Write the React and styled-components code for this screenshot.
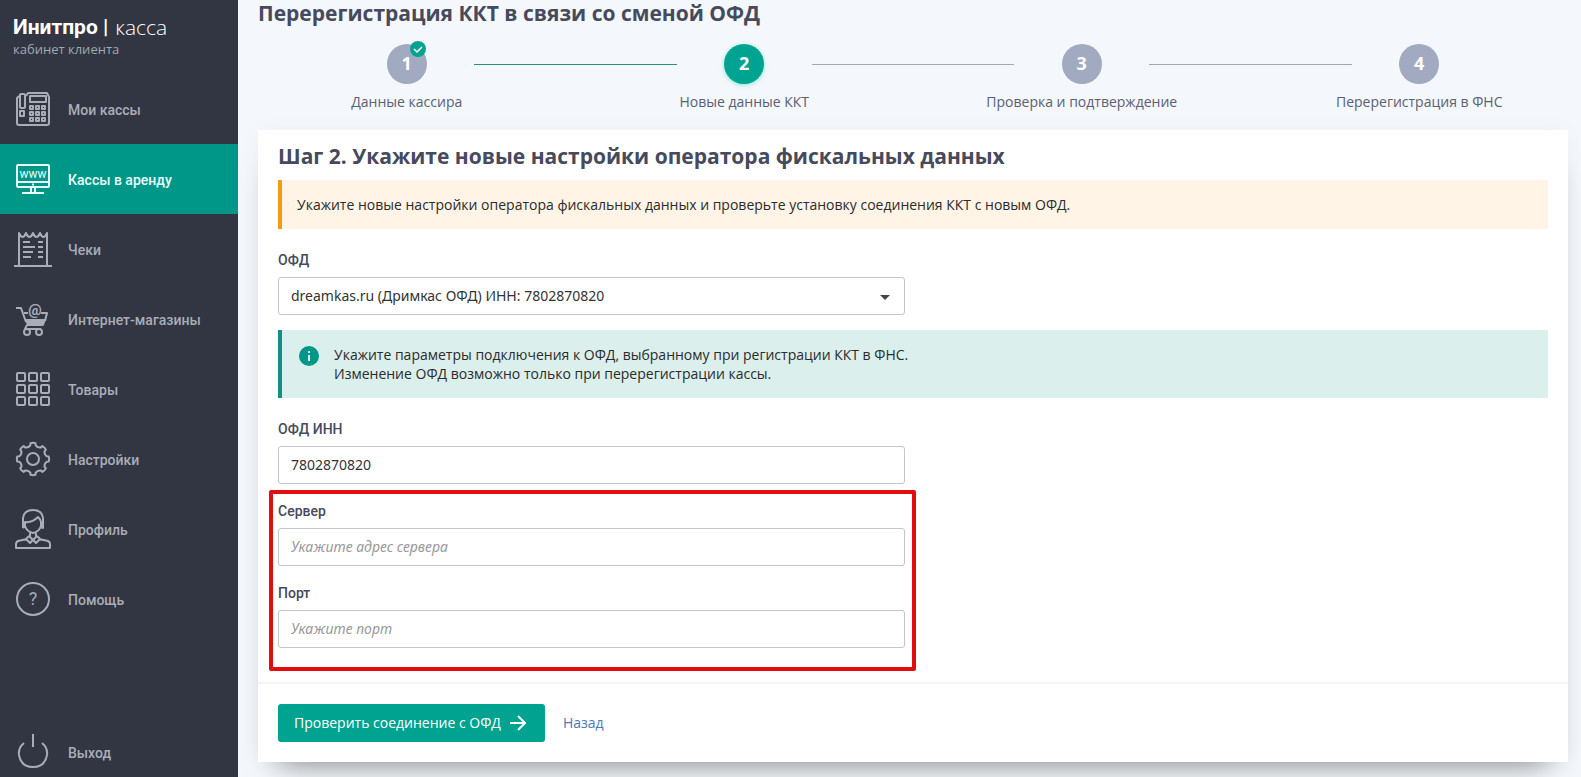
import { useState } from 'react';
import styled, { createGlobalStyle } from 'styled-components';

const menuArr = [
  { title: 'Мои кассы', icon: 'register' },
  { title: 'Кассы в аренду', icon: 'rent' },
  { title: 'Чеки', icon: 'receipt' },
  { title: 'Интернет-магазины', icon: 'cart' },
  { title: 'Товары', icon: 'goods' },
  { title: 'Настройки', icon: 'gear' },
  { title: 'Профиль', icon: 'profile' },
  { title: 'Помощь', icon: 'help' },
];

const stepArr = [
  { title: 'Данные кассира', done: true },
  { title: 'Новые данные ККТ', current: true },
  { title: 'Проверка и подтверждение' },
  { title: 'Перерегистрация в ФНС' },
];

const ofdArr = ['dreamkas.ru (Дримкас ОФД) ИНН: 7802870820'];

// контур шестерёнки из восьми зубцов
const gearPath = () => {
  const point = (radius, deg) => {
    const a = (deg * Math.PI) / 180;
    return `${(20 + radius * Math.cos(a)).toFixed(1)} ${(20 + radius * Math.sin(a)).toFixed(1)}`;
  };
  let d = `M${point(16, -9)}`;
  for (let i = 0; i < 8; i++) {
    const c = i * 45;
    d += ` Q${point(16.6, c)} ${point(16, c + 9)}`;
    d += ` L${point(14, c + 11)} Q${point(12, c + 22.5)} ${point(14, c + 34)} L${point(16, c + 36)}`;
  }
  return `${d}Z`;
};

const keys = [17, 23, 29];
const cells = [4, 16, 28];

const icons = {
  register: (
    <>
      <path d="M6 7 4 9v25q0 2 2 2h28q2 0 2-2V8l-2-4H15l-2 3" />
      <rect x="7" y="5" width="5" height="14" rx="1" />
      <rect x="7" y="22" width="4" height="5" />
      <rect x="17" y="7" width="16" height="6" />
      {keys.map((y) => keys.map((x) => <rect key={`${x}-${y}`} x={x} y={y} width="3" height="3" />))}
    </>
  ),
  rent: (
    <>
      <rect x="4" y="6" width="32" height="22" rx="1" />
      <path d="M4 23h32M18 28v5M22 28v5M9 34h22M19 25.500h2" />
      <text x="20" y="19" fontSize="12" fontWeight="400" textAnchor="middle">www</text>
    </>
  ),
  receipt: (
    <>
      <path d="M6 37V4q3.500 8 7 0 3.500 8 7 0 3.500 8 7 0 3.500 8 7 0v33M1 37h38" />
      <path d="M10 13h7M10 18h12M10 23h10M10 28h8M25 13h5M25 18h5M25 23h5M25 28h5" />
    </>
  ),
  cart: (
    <>
      <path d="M3 9h5l5 14M11 14h4M28 14h6l-2 8" />
      <path d="M12 20h21l-2 6q0 1-2 1H14z" fill="currentColor" stroke="none" />
      <path d="m14 26-2 4h16" />
      <circle cx="14" cy="33" r="3" fill="#323642" />
      <circle cx="26" cy="33" r="3" fill="#323642" />
      <text x="22" y="16" fontSize="15" fontWeight="700" textAnchor="middle">@</text>
    </>
  ),
  goods: cells.map((y) => cells.map((x) => <rect key={`${x}-${y}`} x={x} y={y} width="8" height="8" rx="1" />)),
  gear: (
    <>
      <path d={gearPath()} />
      <circle cx="20" cy="20" r="6" />
    </>
  ),
  profile: (
    <>
      <path d="M10 19V9q1-8 10-8t10 8v10q-1 0-2-2-2 6-8 7-6-1-8-7l-2 2" />
      <path d="M12 18v-5q7 1 13-5 3 3 3 5v5M17 24v4l3 3 3-3v-4" />
      <path d="m16 27-3 3 4 4 3-3 3 3 4-4-3-3M14 30 5 32q-2 1-2 3v4h34v-4q0-2-2-3l-9-2" />
    </>
  ),
  help: (
    <>
      <circle cx="20" cy="20" r="16" />
      <text x="20" y="26" fontSize="18" fontWeight="400" textAnchor="middle">?</text>
    </>
  ),
  exit: <path d="M20 2v13M11 11q-6 5-5 12 2 12 14 12t14-12q1-7-5-12" />,
};

function MenuItem({ title, icon, active, onClick }) {
  return (
    <NavLink href="#" $active={active} onClick={onClick}>
      <NavIcon viewBox="0 0 40 40" aria-hidden="true">{icons[icon]}</NavIcon>
      <NavText>{title}</NavText>
    </NavLink>
  );
}

export default function App() {
  const [section, setSection] = useState('Кассы в аренду');
  const [inn, setInn] = useState('7802870820');
  const [server, setServer] = useState('');
  const [port, setPort] = useState('');

  return (
    <>
      <GlobalStyle />
      <Layout>
        <Sidebar>
          <Logo>
            <Brand>
              <span>Инитпро |</span>
              <BrandLight>касса</BrandLight>
            </Brand>
            <BrandNote>кабинет клиента</BrandNote>
          </Logo>
          <Menu>
            {menuArr.map(({ title, icon }) => (
              <MenuItem
                key={title}
                title={title}
                icon={icon}
                active={title === section}
                onClick={() => setSection(title)}
              />
            ))}
          </Menu>
          <MenuBottom>
            <MenuItem title="Выход" icon="exit" />
          </MenuBottom>
        </Sidebar>

        <Main>
          <PageTitle>Перерегистрация ККТ в связи со сменой ОФД</PageTitle>
          <Steps>
            {stepArr.map(({ title, done, current }, index) => (
              <Step key={title}>
                <StepHead>
                  <StepLine $hidden={index === 0} $done={index > 0 && stepArr[index - 1].done} />
                  <StepCircle $current={current}>
                    {index + 1}
                    {done && (
                      <StepBadge viewBox="0 0 16 16">
                        <circle cx="8" cy="8" r="8" fill="#00a390" />
                        <path d="m4 8 3 3 5-5" fill="none" stroke="#fff" strokeWidth="1.500" />
                      </StepBadge>
                    )}
                  </StepCircle>
                  <StepLine $hidden={index === stepArr.length - 1} $done={done} />
                </StepHead>
                <StepTitle>{title}</StepTitle>
              </Step>
            ))}
          </Steps>

          <Card>
            <CardBody>
              <CardTitle>Шаг 2. Укажите новые настройки оператора фискальных данных</CardTitle>
              <Warning>
                Укажите новые настройки оператора фискальных данных и проверьте установку соединения ККТ с новым ОФД.
              </Warning>

              <FieldGrid>
                <Field>
                  <Label htmlFor="ofd">ОФД</Label>
                  <SelectWrapper>
                    <Select id="ofd">
                      {ofdArr.map((name) => (
                        <option key={name}>{name}</option>
                      ))}
                    </Select>
                    <Caret viewBox="0 0 10 5">
                      <path d="M0 0h10L5 5z" fill="#444" />
                    </Caret>
                  </SelectWrapper>
                </Field>
              </FieldGrid>

              <Info>
                <InfoIcon viewBox="0 0 20 20">
                  <circle cx="10" cy="10" r="10" fill="#009688" />
                  <path d="M9 5h2v2H9zM9 9h2v6H9z" fill="#dbefec" />
                </InfoIcon>
                <div>
                  Укажите параметры подключения к ОФД, выбранному при регистрации ККТ в ФНС.
                  <br />
                  Изменение ОФД возможно только при перерегистрации кассы.
                </div>
              </Info>

              <FieldGrid>
                <Field>
                  <Label htmlFor="inn">ОФД ИНН</Label>
                  <Input id="inn" value={inn} onChange={(e) => setInn(e.target.value)} />
                </Field>
                <Highlight>
                  <Field>
                    <Label htmlFor="server">Сервер</Label>
                    <Input
                      id="server"
                      placeholder="Укажите адрес сервера"
                      value={server}
                      onChange={(e) => setServer(e.target.value)}
                    />
                  </Field>
                  <Field>
                    <Label htmlFor="port">Порт</Label>
                    <Input
                      id="port"
                      placeholder="Укажите порт"
                      value={port}
                      onChange={(e) => setPort(e.target.value)}
                    />
                  </Field>
                </Highlight>
              </FieldGrid>
            </CardBody>

            <CardFooter>
              <SubmitBtn type="button">
                Проверить соединение с ОФД
                <Arrow viewBox="0 0 18 18">
                  <path d="M1 9h15M9 2l7 7-7 7" />
                </Arrow>
              </SubmitBtn>
              <BackLink href="#">Назад</BackLink>
            </CardFooter>
          </Card>
        </Main>
      </Layout>
    </>
  );
}

const GlobalStyle = createGlobalStyle`
  * {
    box-sizing: border-box;
  }
  body {
    margin: 0;
    background: #f4f7fb;
    color: #2b2b2b;
    font-family: 'Open Sans', 'Noto Sans', sans-serif;
    font-size: 14px;
  }
`;

const Layout = styled.div`
  display: flex;
  height: 100vh;
  overflow: hidden;
`;

const Sidebar = styled.aside`
  display: flex;
  flex-direction: column;
  flex: none;
  width: 238px;
  background: #323642;
`;

const Logo = styled.div`
  height: 74px;
  padding: 15px 13px 0;
`;

const Brand = styled.div`
  display: flex;
  align-items: center;
  gap: 7px;
  height: 24px;
  color: white;
  font-family: Roboto, sans-serif;
  font-weight: 700;
  font-size: 21px;
  line-height: 24px;
`;

const BrandLight = styled.span`
  font-family: 'Open Sans', sans-serif;
  font-weight: 300;
`;

const BrandNote = styled.div`
  color: #a3a7b0;
  font-size: 13px;
  line-height: 20px;
`;

const Menu = styled.nav`
  display: flex;
  flex-direction: column;
`;

const MenuBottom = styled(Menu)`
  height: 60px;
  margin-top: auto;
`;

const NavLink = styled.a`
  display: flex;
  flex: none;
  align-items: center;
  gap: 15px;
  height: 70px;
  padding: 0 13px;
  color: ${({ $active }) => ($active ? '#e6fffb' : '#a9adb8')};
  background: ${({ $active }) => ($active ? '#009688' : 'transparent')};
  font-family: Roboto, sans-serif;
  font-weight: 500;
  font-size: 14px;
  text-decoration: none;
`;

const NavText = styled.span`
  padding-top: 2px;
`;

const NavIcon = styled.svg`
  flex: none;
  width: 40px;
  height: 40px;
  fill: none;
  stroke: currentColor;
  stroke-width: 2;
  stroke-linejoin: round;

  text {
    fill: currentColor;
    stroke: none;
    font-family: Roboto, sans-serif;
  }
`;

const Main = styled.main`
  flex: 1;
  min-width: 0;
  padding: 0 13px 0 20px;
  overflow: hidden;
`;

const PageTitle = styled.h1`
  margin: 0;
  color: #464a5c;
  font-weight: 700;
  font-size: 21px;
  line-height: 26px;
`;

const Steps = styled.div`
  display: grid;
  grid-template-columns: repeat(4, 1fr);
  margin: 18px -20px 0;
`;

const Step = styled.div`
  text-align: center;
`;

const StepHead = styled.div`
  display: flex;
  align-items: center;
  justify-content: space-between;
`;

const StepLine = styled.span`
  width: 30%;
  height: 1px;
  background: ${({ $done }) => ($done ? '#1f9384' : '#a0a7ba')};
  visibility: ${({ $hidden }) => ($hidden ? 'hidden' : 'visible')};
`;

const StepCircle = styled.span`
  position: relative;
  width: 40px;
  height: 40px;
  border-radius: 50%;
  color: white;
  background: ${({ $current }) => ($current ? '#00a390' : '#a1aac0')};
  box-shadow: ${({ $current }) => ($current ? '0 1px 4px #7fe8da' : 'none')};
  font-weight: 700;
  font-size: 18px;
  line-height: 38px;
`;

const StepBadge = styled.svg`
  position: absolute;
  top: -3px;
  right: 1px;
  width: 16px;
  height: 16px;
`;

const StepTitle = styled.div`
  margin-top: 8px;
  color: #5a6072;
  line-height: 20px;
`;

const Card = styled.section`
  margin-top: 18px;
  background: white;
  box-shadow: 0 20px 30px -20px rgba(0, 0, 0, 0.5), 0 0 20px rgba(0, 0, 0, 0.03);
`;

const CardBody = styled.div`
  padding: 12px 20px 11px;
`;

const CardTitle = styled.h2`
  margin: 0 0 10px;
  color: #464a5c;
  font-weight: 700;
  font-size: 21px;
  line-height: 28px;
`;

const Warning = styled.div`
  padding: 15px;
  border-left: 4px solid #f39c12;
  background: #fff4e6;
  line-height: 19px;
`;

const Info = styled.div`
  display: flex;
  gap: 15px;
  margin-top: 15px;
  padding: 15px 17px;
  border-left: 4px solid #128f80;
  background: #dbefec;
  line-height: 19px;
`;

const InfoIcon = styled.svg`
  flex: none;
  width: 20px;
  height: 20px;
  margin-top: 1px;
`;

const FieldGrid = styled.div`
  width: calc(50% - 8px);
  padding-top: 21px;
`;

const Field = styled.div`
  display: flex;
  flex-direction: column;
  gap: 7px;
`;

const Label = styled.label`
  color: #464a5c;
  font-family: Roboto, sans-serif;
  font-weight: 500;
  line-height: 20px;
`;

const Input = styled.input`
  width: 100%;
  height: 38px;
  padding: 0 12px 2px;
  border: 1px solid #c1c5cd;
  border-radius: 3px;
  background: white;
  color: #333;
  font-family: 'Noto Sans', sans-serif;
  font-size: 14px;

  &::placeholder {
    color: #999;
    font-style: italic;
    opacity: 1;
  }
`;

const SelectWrapper = styled.div`
  position: relative;
`;

const Select = styled(Input).attrs({ as: 'select' })`
  appearance: none;
  cursor: pointer;
`;

const Caret = styled.svg`
  position: absolute;
  top: 18px;
  right: 15px;
  width: 10px;
  height: 5px;
  pointer-events: none;
`;

// рамка вокруг полей, которые нужно заполнить
const Highlight = styled.div`
  display: grid;
  gap: 17px;
  margin: 6px -11px 0 -9px;
  padding: 7px 7px 19px 5px;
  border: 4px solid #e30c0f;
  border-radius: 2px;
`;

const CardFooter = styled.div`
  display: flex;
  align-items: center;
  gap: 18px;
  padding: 20px;
  border-top: 2px solid #f3f3f5;
`;

const SubmitBtn = styled.button`
  display: flex;
  align-items: center;
  gap: 8px;
  height: 38px;
  padding: 0 18px 2px 16px;
  border: none;
  border-radius: 3px;
  background: #00a390;
  color: white;
  font-family: inherit;
  font-size: 14px;
  cursor: pointer;
`;

const Arrow = styled.svg`
  width: 18px;
  height: 18px;
  margin-top: 2px;
  fill: none;
  stroke: currentColor;
  stroke-width: 2;
`;

const BackLink = styled.a`
  padding-bottom: 2px;
  color: #4f78b8;
  text-decoration: none;
`;
